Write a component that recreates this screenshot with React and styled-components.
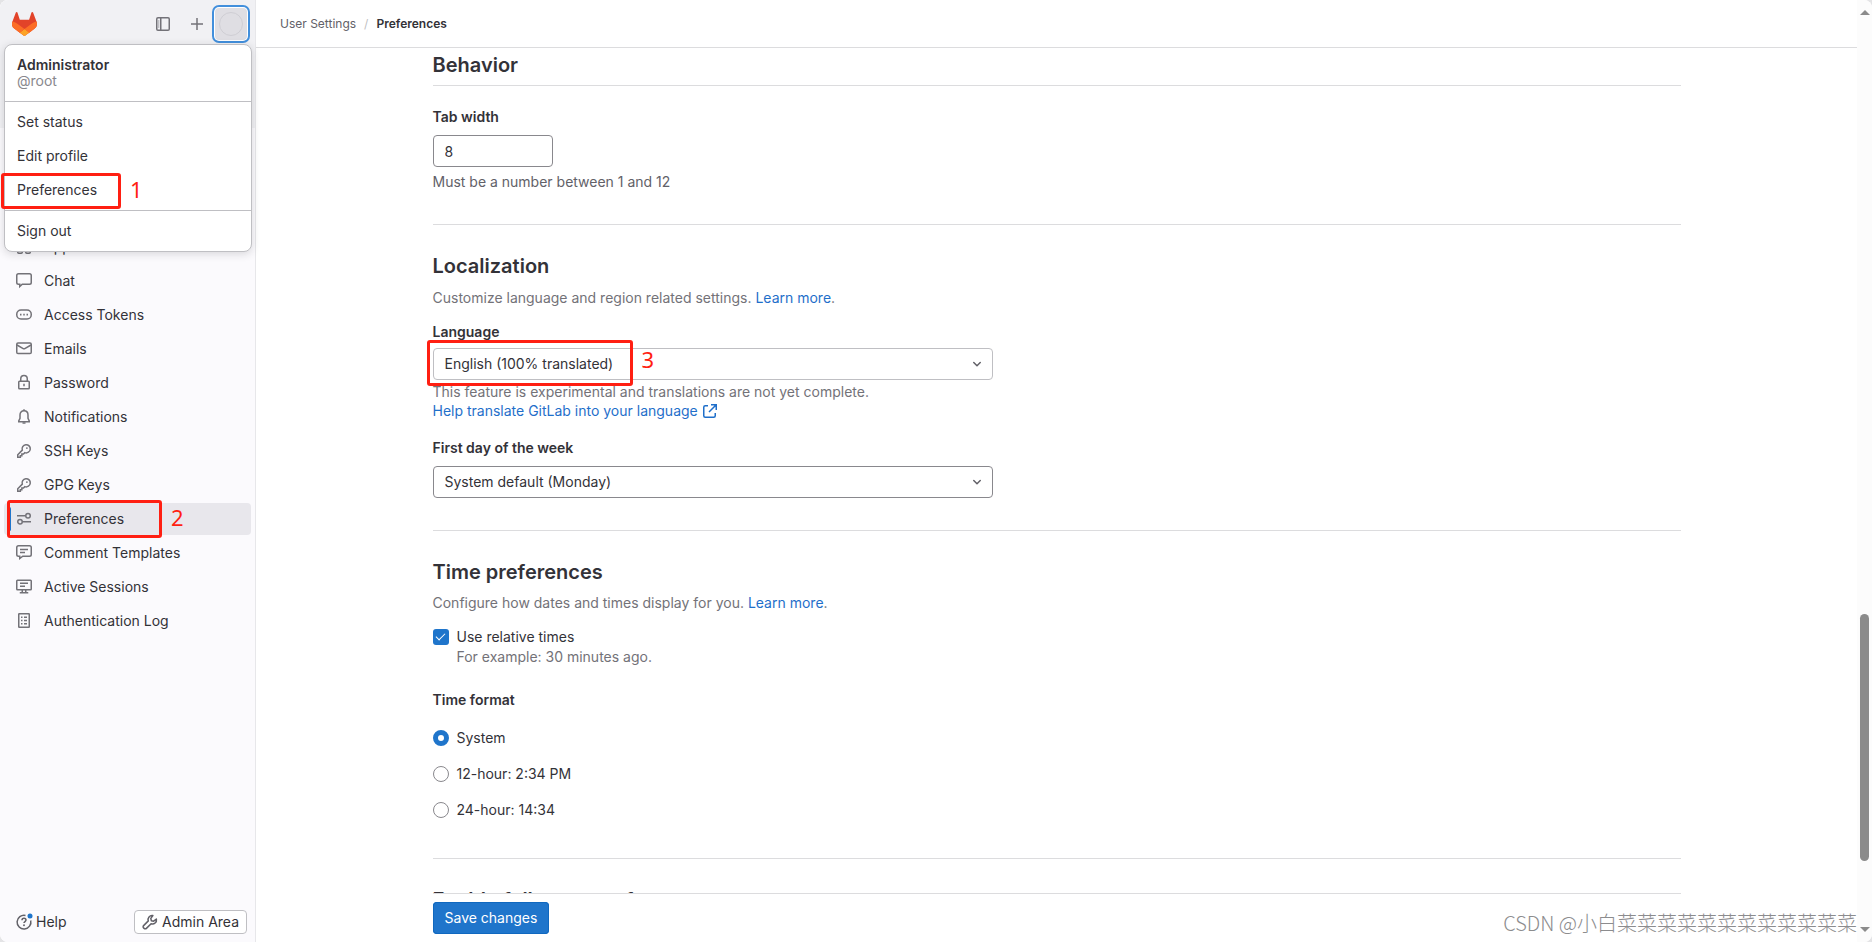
import styled, { createGlobalStyle } from 'styled-components';

const GlobalStyle = createGlobalStyle`
  *, *::before, *::after { box-sizing: border-box; }
  body {
    margin: 0;
    background: #e4e4e6;
    color: #333238;
    font-family: Inter, "Noto Sans", sans-serif;
    font-size: 14px;
    line-height: 20px;
  }
  button, input, select { font: inherit; color: inherit; }
  ul { margin: 0; padding: 0; list-style: none; }
`;

const Page = styled.div`
  position: relative;
  display: flex;
  height: 100vh;
  overflow: hidden;
  border-radius: 8px;
  background: #fff;
`;

/* ---------- icons ---------- */

const Svg = styled.svg`
  flex: none;
  width: 16px;
  height: 16px;
  fill: none;
  stroke: currentColor;
  stroke-width: 1.5;
`;

const paths = {
  applications: (
    <>
      <rect x="1.75" y="1.75" width="4.5" height="4.5" rx="1" />
      <rect x="9.75" y="1.75" width="4.5" height="4.5" rx="1" />
      <rect x="1.75" y="9.75" width="4.5" height="4.5" rx="1" />
      <rect x="9.75" y="9.75" width="4.5" height="4.5" rx="1" />
    </>
  ),
  chat: <path d="M2.5.75h11c.97 0 1.75.78 1.75 1.75v7c0 .97-.78 1.75-1.75 1.75H6.25L3.75 13.5v-2.25H2.5c-.97 0-1.75-.78-1.75-1.75v-7C.75 1.53 1.53.75 2.5.75z" />,
  token: (
    <>
      <rect x=".75" y="3" width="14.5" height="9" rx="4.25" />
      <path d="M4 7.5h1.5M7.25 7.5h1.5M10.5 7.5H12" strokeWidth="1.75" />
    </>
  ),
  mail: (
    <>
      <rect x=".75" y="2" width="14.5" height="10.5" rx="1.25" />
      <path d="M1 4l6.2 3.6c.5.3 1.1.3 1.6 0L15 4" />
    </>
  ),
  lock: (
    <>
      <rect x="2.75" y="6.25" width="10.5" height="7.5" rx=".75" />
      <path d="M4.75 6V3.75a3.25 3.25 0 0 1 6.5 0V6M8 8.75v2.5" />
    </>
  ),
  bell: (
    <>
      <path d="M8 1.75c-2.6 0-4 1.9-4 4.25v3.25L2.75 12v.75h10.5V12L12 9.25V6c0-2.35-1.4-4.25-4-4.25z" />
      <path d="M8 .25V2M6.5 14h3" />
    </>
  ),
  key: (
    <>
      <path d="M6.3 7.1 1.75 11.7v2.55h2.6v-1.6h1.5v-1.6h1.6l1.4-1.4a4.1 4.1 0 1 0-2.55-2.55z" />
      <circle cx="10.9" cy="5.1" r=".9" fill="currentColor" stroke="none" />
    </>
  ),
  preferences: (
    <>
      <path d="M1 4.75h8.5M6.5 10.75H15" />
      <circle cx="12" cy="4.75" r="2.25" />
      <circle cx="4" cy="10.75" r="2.25" />
    </>
  ),
  comment: (
    <>
      <path d="M2.5.75h11c.97 0 1.75.78 1.75 1.75v7c0 .97-.78 1.75-1.75 1.75H6.75L3.75 13.5v-2.25H2.5c-.97 0-1.75-.78-1.75-1.75v-7C.75 1.53 1.53.75 2.5.75z" />
      <path d="M4 4.5h8M4 7.5h5" />
    </>
  ),
  monitor: (
    <>
      <rect x=".75" y="1.25" width="14.5" height="9.5" rx=".75" />
      <path d="M4 4.25h8M4 7.25h5M6.25 11v2.25M9.75 11v2.25M3.75 13.75h8.5" />
    </>
  ),
  log: (
    <>
      <rect x="2.75" y=".75" width="10.5" height="13.5" rx=".5" />
      <path d="M5 4.25h1.5M8 4.25h3M5 7.5h1.5M8 7.5h3M5 10.75h1.5M8 10.75h3" />
    </>
  ),
  sidebar: (
    <>
      <rect x="1.75" y="1.75" width="12.5" height="12.5" rx="1.25" />
      <path d="M5.75 2v12" />
      <path d="M3.75 4v8" strokeWidth=".5" />
    </>
  ),
  plus: <path d="M8 2v12M2 8h12" />,
  chevron: <path d="M4.75 6.5 8 9.75l3.25-3.25" strokeLinecap="round" strokeLinejoin="round" />,
  external: <path d="M6 2.75H3.25a1.5 1.5 0 0 0-1.5 1.5v8.5c0 .83.67 1.5 1.5 1.5h8.5c.83 0 1.5-.67 1.5-1.5V10M9 1.75h5.25V7M14 2 7 9" />,
  wrench: <path d="M10.9 1.6a4 4 0 0 0-4.6 5.3l-4.7 4.7a1.6 1.6 0 0 0 0 2.3l.5.5c.6.6 1.7.6 2.3 0l4.7-4.7a4 4 0 0 0 5.3-4.6L11.6 7.2 9.3 6.7 8.8 4.4z" strokeLinejoin="round" />,
  help: (
    <>
      <path d="M9.5 1.4A6.9 6.9 0 1 0 14.7 6.5" />
      <path d="M6 6.25c0-1.2.9-1.9 2-1.9s2 .75 2 1.75c0 1.4-2 1.5-2 3" />
      <circle cx="8" cy="11.25" r=".95" fill="currentColor" stroke="none" />
      <circle cx="14" cy="2" r="2.5" fill="#1f75cb" stroke="none" />
    </>
  ),
};

const Icon = ({ name }) => (
  <Svg viewBox="0 0 16 16" aria-hidden="true" overflow="visible">
    {paths[name]}
  </Svg>
);

const LogoSvg = styled.svg`
  width: 25px;
  height: 24px;
  display: block;
`;

const Logo = () => (
  <LogoSvg viewBox="0 0 25 24" aria-hidden="true">
    <path
      d="m24.507 9.5-.034-.09L21.082.562a.896.896 0 0 0-1.694.091l-2.29 7.01H7.825L5.535.653a.898.898 0 0 0-1.694-.09L.451 9.411.416 9.5a6.297 6.297 0 0 0 2.09 7.278l.012.01.03.022 5.16 3.867 2.56 1.935 1.554 1.176a1.051 1.051 0 0 0 1.268 0l1.555-1.176 2.56-1.935 5.197-3.89.014-.01A6.297 6.297 0 0 0 24.507 9.5Z"
      fill="#e24329"
    />
    <path
      d="m24.507 9.5-.034-.09a11.44 11.44 0 0 0-4.56 2.051l-7.447 5.632 4.742 3.584 5.197-3.89.014-.01A6.297 6.297 0 0 0 24.507 9.5Z"
      fill="#fc6d26"
    />
    <path
      d="m7.707 20.677 2.56 1.935 1.555 1.176a1.051 1.051 0 0 0 1.268 0l1.555-1.176 2.56-1.935-4.743-3.584-4.755 3.584Z"
      fill="#fca326"
    />
    <path
      d="M5.01 11.461a11.43 11.43 0 0 0-4.56-2.05L.416 9.5a6.297 6.297 0 0 0 2.09 7.278l.012.01.03.022 5.16 3.867 4.745-3.584-7.444-5.632Z"
      fill="#fc6d26"
    />
  </LogoSvg>
);

/* ---------- numbered red callouts ---------- */

const Marked = styled.div`
  position: relative;
`;

const CalloutBox = styled.span`
  position: absolute;
  z-index: 3;
  left: ${props => props.$left}px;
  top: ${props => props.$top}px;
  width: ${props => props.$width}px;
  height: ${props => props.$height}px;
  border: 3px solid #ff1f12;
  border-radius: 3px;
  pointer-events: none;
`;

const CalloutNumber = styled.span`
  position: absolute;
  left: 100%;
  top: 50%;
  margin: ${props => props.$lift}px 0 0 12px;
  color: #ff1f12;
  font: 22px/24px "Noto Sans", sans-serif;
`;

const Callout = ({ number, left, top, width, height, lift = -14 }) => (
  <CalloutBox $left={left} $top={top} $width={width} $height={height}>
    <CalloutNumber $lift={lift}>{number}</CalloutNumber>
  </CalloutBox>
);

/* ---------- sidebar ---------- */

const Sidebar = styled.aside`
  position: relative;
  display: flex;
  flex-direction: column;
  flex: 0 0 256px;
  border-right: 1px solid #e7e7ea;
  background: #fbfafd;
`;

const UserBar = styled.header`
  display: flex;
  align-items: flex-start;
  height: 128px;
  padding: 8px 8px 0 12px;
  background: #f1f1f4;
`;

const LogoLink = styled.a`
  margin: 4px auto 0 0;
`;

const IconButton = styled.button`
  display: grid;
  place-items: center;
  width: 32px;
  height: 32px;
  margin-right: 2px;
  padding: 0;
  border: 0;
  background: none;
  color: #737278;
`;

const AvatarButton = styled(IconButton)`
  margin: 0;
  border-radius: 4px;
  background: #dfdee3;
  box-shadow: 0 0 0 1px #fff, 0 0 0 3px #428fdc;
`;

const Avatar = styled.span`
  width: 24px;
  height: 24px;
  border: 1px solid #cfced4;
  border-radius: 50%;
`;

const Menu = styled.div`
  position: absolute;
  z-index: 2;
  top: 44px;
  left: 4px;
  width: 248px;
  border: 1px solid #bfbfc3;
  border-radius: 8px;
  background: #fff;
  box-shadow: 0 2px 8px rgba(31, 30, 36, 0.16);
`;

const MenuUser = styled.div`
  padding: 12px;
  line-height: 16px;
`;

const UserName = styled.div`
  font-weight: 600;
`;

const Handle = styled.div`
  color: #89888d;
`;

const MenuGroup = styled.ul`
  display: grid;
  gap: 2px;
  padding: 4px 0;
  border-top: 1px solid #bfbfc3;
`;

const MenuButton = styled.button`
  display: block;
  width: 100%;
  height: 32px;
  padding: 0 12px;
  border: 0;
  background: none;
  text-align: left;
`;

const Nav = styled.nav`
  flex: 1;
  padding: 103px 4px 0;
`;

const NavList = styled.ul`
  display: grid;
  gap: 2px;
`;

const NavLink = styled.a`
  display: flex;
  align-items: center;
  gap: 12px;
  height: 32px;
  padding: 0 12px;
  border-radius: 4px;
  background: ${props => (props.$active ? '#e8e7ec' : 'none')};
  color: #333238;
  text-decoration: none;

  svg {
    color: #737278;
  }

  &::before {
    content: '';
    display: ${props => (props.$active ? 'block' : 'none')};
    width: 3px;
    height: 24px;
    margin: 0 -7px 0 -8px;
    border-radius: 2px;
    background: #1f75cb;
  }
`;

const SidebarFooter = styled.footer`
  display: flex;
  align-items: center;
  justify-content: space-between;
  padding: 8px;
`;

const FooterButton = styled.button`
  display: flex;
  align-items: center;
  gap: 4px;
  height: 24px;
  padding: 0 7px;
  border: 1px solid ${props => (props.$outlined ? '#bfbfc3' : 'transparent')};
  border-radius: 4px;
  background: ${props => (props.$outlined ? '#fff' : 'none')};

  svg {
    color: #626168;
  }
`;

const navItems = [
  { icon: 'applications', label: 'Applications' },
  { icon: 'chat', label: 'Chat' },
  { icon: 'token', label: 'Access Tokens' },
  { icon: 'mail', label: 'Emails' },
  { icon: 'lock', label: 'Password' },
  { icon: 'bell', label: 'Notifications' },
  { icon: 'key', label: 'SSH Keys' },
  { icon: 'key', label: 'GPG Keys' },
  { icon: 'preferences', label: 'Preferences', active: true },
  { icon: 'comment', label: 'Comment Templates' },
  { icon: 'monitor', label: 'Active Sessions' },
  { icon: 'log', label: 'Authentication Log' },
];

const UserMenu = () => (
  <Menu>
    <MenuUser>
      <UserName>Administrator</UserName>
      <Handle>@root</Handle>
    </MenuUser>
    <MenuGroup>
      <li><MenuButton>Set status</MenuButton></li>
      <li><MenuButton>Edit profile</MenuButton></li>
      <Marked as="li">
        <MenuButton>Preferences</MenuButton>
        <Callout number="1" left={-4} top={-1} width={120} height={36} />
      </Marked>
    </MenuGroup>
    <MenuGroup>
      <li><MenuButton>Sign out</MenuButton></li>
    </MenuGroup>
  </Menu>
);

const SettingsSidebar = () => (
  <Sidebar>
    <UserBar>
      <LogoLink href="#" aria-label="Homepage"><Logo /></LogoLink>
      <IconButton aria-label="Hide sidebar"><Icon name="sidebar" /></IconButton>
      <IconButton aria-label="Create new"><Icon name="plus" /></IconButton>
      <AvatarButton aria-label="User menu"><Avatar /></AvatarButton>
    </UserBar>
    <UserMenu />
    <Nav>
      <NavList>
        {navItems.map(({ icon, label, active }) => (
          <Marked as="li" key={label}>
            <NavLink href="#" $active={active}>
              <Icon name={icon} />
              {label}
            </NavLink>
            {active && <Callout number="2" left={3} top={-3} width={155} height={38} />}
          </Marked>
        ))}
      </NavList>
    </Nav>
    <SidebarFooter>
      <FooterButton><Icon name="help" />Help</FooterButton>
      <FooterButton $outlined><Icon name="wrench" />Admin Area</FooterButton>
    </SidebarFooter>
  </Sidebar>
);

/* ---------- main column ---------- */

const Main = styled.main`
  display: flex;
  flex: 1;
  flex-direction: column;
  min-width: 0;
`;

const TopBar = styled.div`
  display: flex;
  align-items: center;
  gap: 8px;
  flex: 0 0 48px;
  padding: 0 24px;
  border-bottom: 1px solid #dcdcde;
  font-size: 12px;
  line-height: 16px;
`;

const Crumb = styled.a`
  color: ${props => (props.$current ? '#333238' : '#626168')};
  font-weight: ${props => (props.$current ? 600 : 400)};
  text-decoration: none;
`;

const Separator = styled.span`
  color: #bfbfc3;
`;

const Form = styled.form`
  display: flex;
  flex: 1;
  flex-direction: column;
  width: 100%;
  max-width: 1280px;
  min-height: 0;
  margin: 0 auto;
`;

const Scroller = styled.div`
  flex: 1;
  min-height: 0;
  padding: 0 16px;
  overflow: hidden;
`;

const Title = styled.h2`
  margin: 0;
  font-size: 20px;
  font-weight: 600;
  line-height: 24px;
`;

const FirstTitle = styled(Title)`
  padding: 5px 0 8px;
  border-bottom: 1px solid #dcdcde;
`;

const Section = styled.section`
  padding: ${props => props.$top || 29}px 0 ${props => props.$bottom || 32}px;
  border-bottom: 1px solid #dcdcde;
`;

const Description = styled.p`
  margin: ${props => props.$gap || 9}px 0 14px;
  color: #737278;
`;

const Link = styled.a`
  display: inline-flex;
  align-items: center;
  gap: 4px;
  color: #1f6fca;
  text-decoration: none;
`;

const Field = styled.div`
  display: flex;
  flex-direction: column;
  align-items: flex-start;

  & + & {
    margin-top: 17px;
  }
`;

const Label = styled.label`
  margin-bottom: ${props => (props.$tight ? 6 : 8)}px;
  font-weight: 600;
`;

const NumberInput = styled.input`
  width: 120px;
  height: 32px;
  padding: 0 11px;
  border: 1px solid #89888d;
  border-radius: 4px;
  background: #fff;
`;

const Help = styled.p`
  margin: ${props => props.$gap || 0}px 0 0;
  color: ${props => (props.$dark ? '#626168' : '#737278')};
  line-height: ${props => (props.$tight ? 19 : 20)}px;
`;

const SelectBox = styled.div`
  position: relative;
  width: 560px;
  max-width: 100%;

  > svg {
    position: absolute;
    top: 8px;
    right: 8px;
    color: #626168;
    pointer-events: none;
  }
`;

const Select = styled.select`
  display: block;
  width: 100%;
  height: 32px;
  padding: 0 32px 0 11px;
  border: 1px solid ${props => (props.$light ? '#bfbfc3' : '#89888d')};
  border-radius: 4px;
  background: #fff;
  appearance: none;
`;

const Choice = styled.label`
  display: grid;
  grid-template-columns: 16px auto;
  align-items: center;
  justify-content: start;
  column-gap: 8px;

  ${Help} {
    grid-column: 2;
  }
`;

const Checkbox = styled.input`
  display: grid;
  place-items: center;
  width: 16px;
  height: 16px;
  margin: 0;
  border-radius: 3px;
  background: #1f75cb;
  appearance: none;

  &::after {
    content: '';
    width: 9px;
    height: 5px;
    margin-top: -3px;
    border: solid #fff;
    border-width: 0 0 1px 1px;
    transform: rotate(-45deg);
  }
`;

const Fieldset = styled.fieldset`
  display: grid;
  gap: 16px;
  margin: 23px 0 0;
  padding: 0;
  border: 0;
`;

const Legend = styled.legend`
  margin-bottom: 18px;
  padding: 0;
  font-weight: 600;
`;

const Radio = styled.input`
  width: 16px;
  height: 16px;
  margin: 0;
  border: 1px solid #89888d;
  border-radius: 50%;
  background: #fff;
  appearance: none;

  &:checked {
    border: 5px solid #1f75cb;
  }
`;

const Actions = styled.div`
  margin: 0 16px;
  padding: 8px 0;
  border-top: 1px solid #dcdcde;
`;

const SaveButton = styled.button`
  height: 32px;
  padding: 0 12px;
  border: 0;
  border-radius: 4px;
  background: #1f75cb;
  box-shadow: inset 0 0 0 1px #1068bf;
  color: #fff;
`;

const Preferences = () => (
  <Main>
    <TopBar>
      <Crumb href="#">User Settings</Crumb>
      <Separator>/</Separator>
      <Crumb href="#" $current>Preferences</Crumb>
    </TopBar>
    <Form>
      <Scroller>
        <FirstTitle>Behavior</FirstTitle>
        <Section $top={21}>
          <Field>
            <Label htmlFor="tab-width">Tab width</Label>
            <NumberInput id="tab-width" defaultValue="8" inputMode="numeric" />
            <Help $gap={5} $dark>Must be a number between 1 and 12</Help>
          </Field>
        </Section>

        <Section>
          <Title>Localization</Title>
          <Description $gap={10}>
            Customize language and region related settings. <Link href="#">Learn more</Link>.
          </Description>
          <Field>
            <Label $tight htmlFor="language">Language</Label>
            <Marked>
              <SelectBox>
                <Select id="language" $light>
                  <option>English (100% translated)</option>
                </Select>
                <Icon name="chevron" />
              </SelectBox>
              <Callout number="3" left={-6} top={-8} width={206} height={46} lift={-16} />
            </Marked>
            <Help $gap={2} $tight>This feature is experimental and translations are not yet complete.</Help>
            <Link href="#">
              Help translate GitLab into your language
              <Icon name="external" />
            </Link>
          </Field>
          <Field>
            <Label htmlFor="first-day">First day of the week</Label>
            <SelectBox>
              <Select id="first-day">
                <option>System default (Monday)</option>
              </Select>
              <Icon name="chevron" />
            </SelectBox>
          </Field>
        </Section>

        <Section $bottom={38}>
          <Title>Time preferences</Title>
          <Description>
            Configure how dates and times display for you. <Link href="#">Learn more</Link>.
          </Description>
          <Choice>
            <Checkbox type="checkbox" defaultChecked />
            Use relative times
            <Help as="span">For example: 30 minutes ago.</Help>
          </Choice>
          <Fieldset>
            <Legend>Time format</Legend>
            <Choice><Radio type="radio" name="time-format" defaultChecked />System</Choice>
            <Choice><Radio type="radio" name="time-format" />12-hour: 2:34 PM</Choice>
            <Choice><Radio type="radio" name="time-format" />24-hour: 14:34</Choice>
          </Fieldset>
        </Section>

        <Section>
          <Title>Enable follow users feature</Title>
        </Section>
      </Scroller>
      <Actions>
        <SaveButton type="button">Save changes</SaveButton>
      </Actions>
    </Form>
  </Main>
);

/* ---------- scroll rail and watermark ---------- */

const Rail = styled.div`
  display: flex;
  flex: 0 0 15px;
  flex-direction: column;
  align-items: center;
  justify-content: space-between;
  padding: 10px 0;
  background: #fcfcfc;
`;

const Arrow = styled.span`
  border: solid transparent;
  border-width: ${props => (props.$down ? '5px 5px 0' : '0 5px 5px')};
  border-${props => (props.$down ? 'top' : 'bottom')}-color: #8b8b8b;
`;

const Track = styled.div`
  display: grid;
  flex: 1;
  grid-template-rows: 599fr 247fr 66fr;
  width: 9px;
`;

const Thumb = styled.div`
  grid-row: 2;
  border-radius: 5px;
  background: #8b8b8b;
`;

const Watermark = styled.div`
  position: absolute;
  right: 15px;
  bottom: 5px;
  color: #8c8c8e;
  font: 300 20px/28px "Noto Sans CJK SC", sans-serif;
  white-space: nowrap;
`;

const App = () => (
  <>
    <GlobalStyle />
    <Page>
      <SettingsSidebar />
      <Preferences />
      <Rail aria-hidden="true">
        <Arrow />
        <Track><Thumb /></Track>
        <Arrow $down />
      </Rail>
      <Watermark>CSDN @小白菜菜菜菜菜菜菜菜菜菜菜菜</Watermark>
    </Page>
  </>
);

export default App;
